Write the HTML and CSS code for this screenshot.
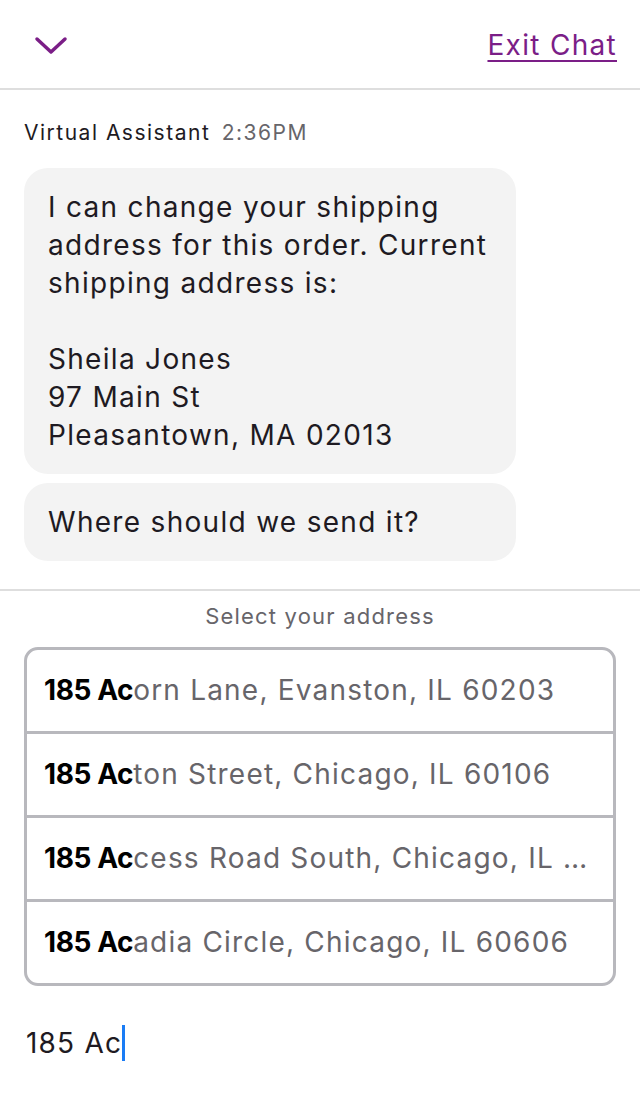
FILE: index.html
```html
<!DOCTYPE html>
<html lang="en">
<head>
  <meta charset="UTF-8">
  <title>Chat</title>
  <link rel="stylesheet" href="styles.css">
</head>
<body>

<div class="header">
  <svg class="chevron" width="34" height="20" viewBox="0 0 34 20">
    <path d="M3 3 L17 16 L31 3" fill="none" stroke="#7b1e87" stroke-width="3.5" stroke-linecap="round" stroke-linejoin="round"/>
  </svg>
  <a class="exit" href="#">Exit Chat</a>
</div>

<div class="chat">
  <div class="meta"><span class="sender">Virtual Assistant</span> <span class="time">2:36PM</span></div>
  <div class="bubble">I can change your shipping address for this order. Current shipping address is:<br><br>Sheila Jones<br>97 Main St<br>Pleasantown, MA 02013</div>
  <div class="bubble">Where should we send it?</div>
</div>

<div class="picker">
  <div class="picker-title">Select your address</div>
  <div class="options">
    <div class="option"><b>185 Ac</b>orn Lane, Evanston, IL 60203</div>
    <div class="option"><b>185 Ac</b>ton Street, Chicago, IL 60106</div>
    <div class="option"><b>185 Ac</b>cess Road South, Chicago, IL …</div>
    <div class="option"><b>185 Ac</b>adia Circle, Chicago, IL 60606</div>
  </div>
  <div class="entry">185 Ac<span class="caret"></span></div>
</div>

</body>
</html>
```

FILE: styles.css
```css
body {
  margin: 0;
  font-family: Inter, "Noto Sans", sans-serif;
  color: #1e1a22;
  background: #fff;
}
.header {
  height: 88px;
  display: flex;
  align-items: center;
  justify-content: space-between;
  padding: 0 24px 0 34px;
  border-bottom: 2px solid #dedede;
}
.chevron {
  margin-top: 4px;
}
.exit {
  color: #7b1e87;
  font-size: 28px;
  letter-spacing: 1.3px;
  margin-right: -1px;
  text-decoration: underline;
  text-decoration-thickness: 2px;
  text-underline-offset: 5px;
  margin-top: 1px;
}
.chat {
  padding: 28px 124px 28px 24px;
  border-bottom: 2px solid #dedede;
}
.meta {
  font-size: 21px;
  line-height: 30px;
  letter-spacing: 1.5px;
  margin-bottom: 20px;
}
.time {
  color: #67656a;
  margin-left: 4px;
}
.bubble {
  background: #f3f3f3;
  border-radius: 24px;
  padding: 20px 24px;
  font-size: 28px;
  line-height: 38px;
  letter-spacing: 1.3px;
  margin-bottom: 9px;
}
.bubble:last-child {
  margin-bottom: 0;
}
.picker {
  padding: 10px 24px 0;
}
.picker-title {
  text-align: center;
  font-size: 22px;
  line-height: 30px;
  letter-spacing: 1.2px;
  color: #67656a;
  margin-bottom: 16px;
}
.options {
  border: 3px solid #b8b8bd;
  border-radius: 14px;
  overflow: hidden;
}
.option {
  height: 81px;
  line-height: 81px;
  padding: 0 20px 0 17px;
  font-size: 28px;
  letter-spacing: 1.2px;
  color: #67656a;
  white-space: nowrap;
}
.option + .option {
  border-top: 3px solid #b8b8bd;
}
.option b {
  color: #000;
  font-weight: 700;
  letter-spacing: -0.4px;
}
.entry {
  margin-top: 38px;
  padding-left: 2px;
  font-size: 28px;
  line-height: 38px;
  letter-spacing: 1.2px;
  display: flex;
  align-items: center;
}
.caret {
  display: inline-block;
  width: 3px;
  height: 36px;
  background: #1a7cf5;
}
```
